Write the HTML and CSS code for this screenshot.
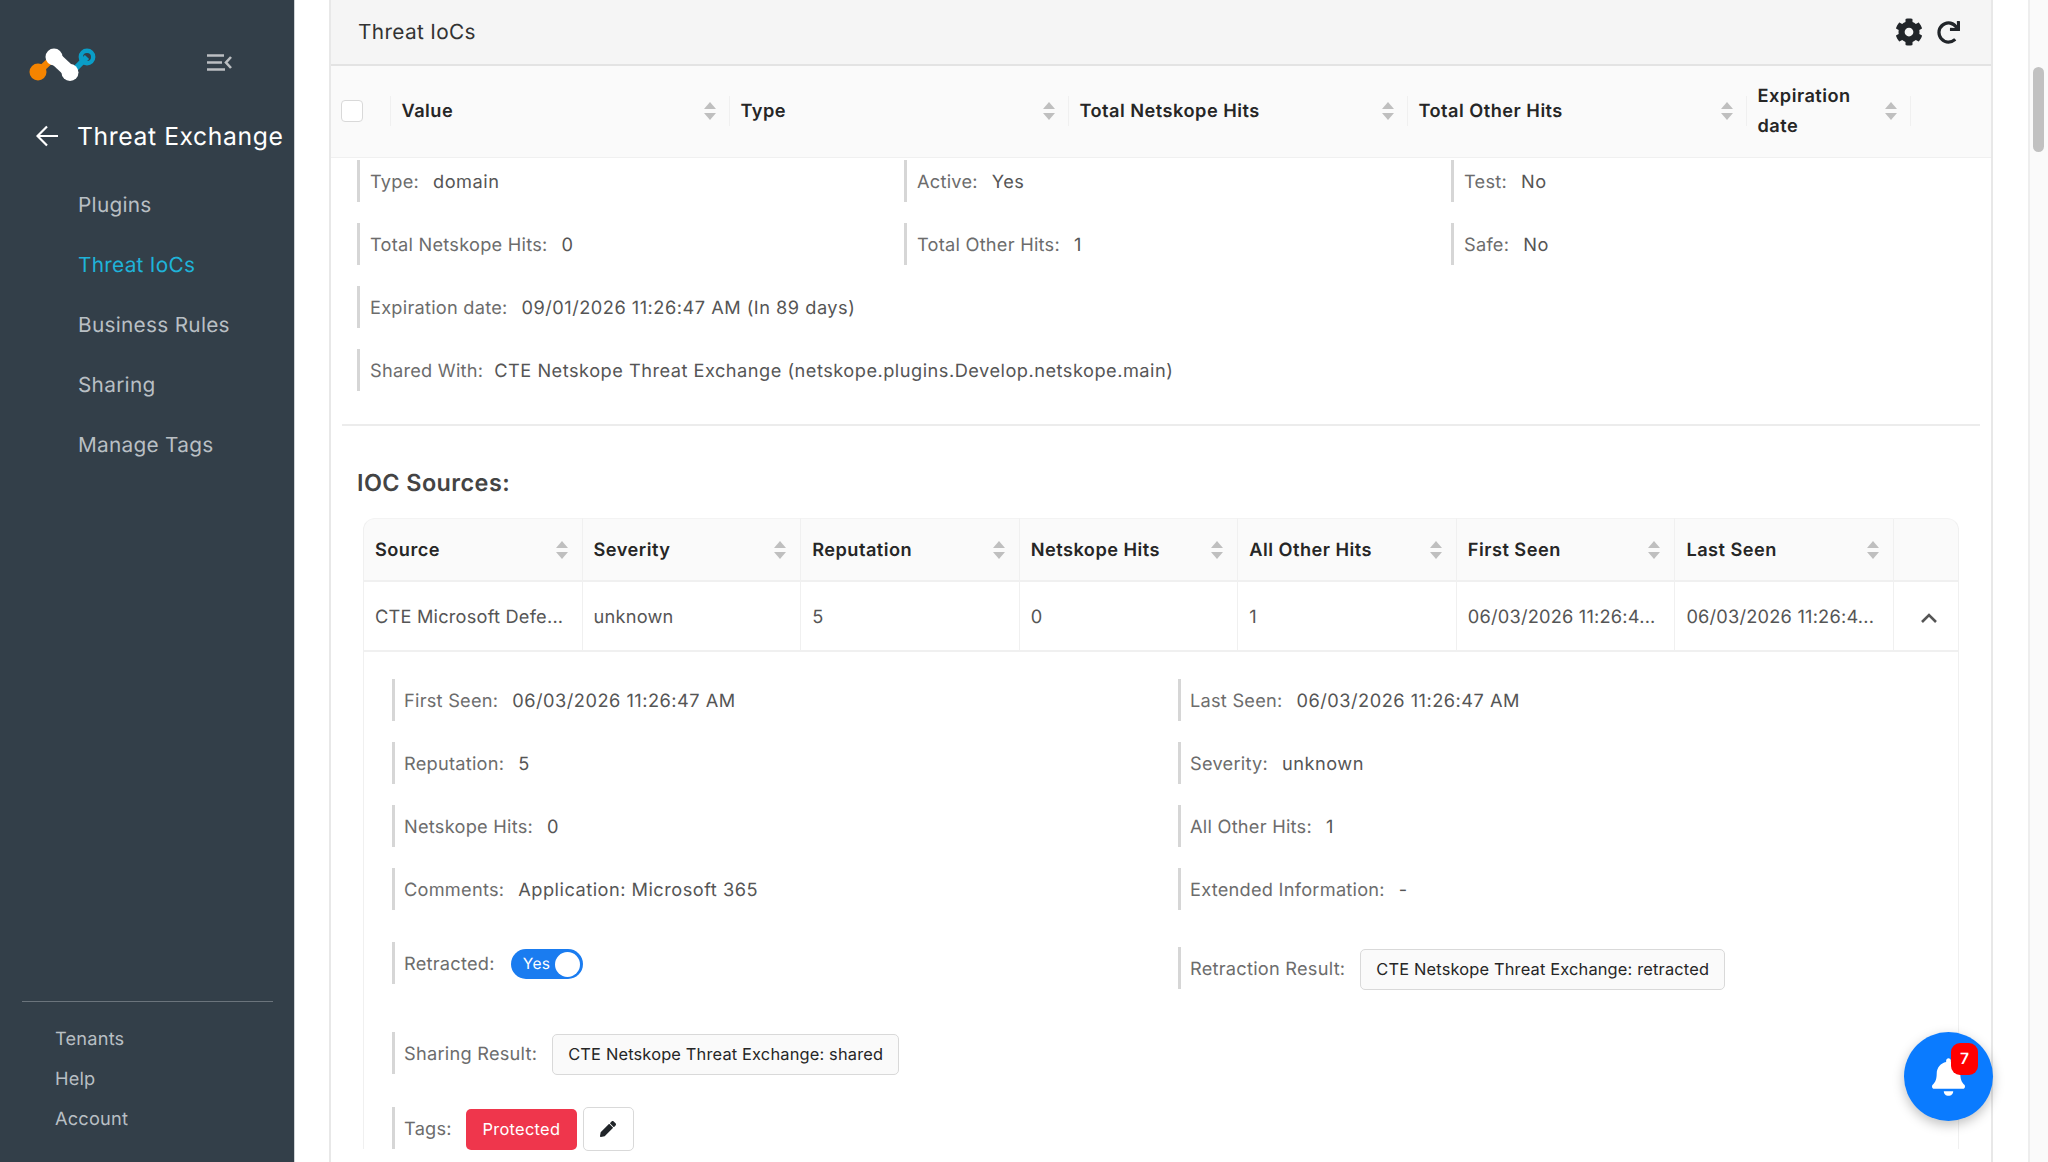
FILE: index.html
```html
<!DOCTYPE html>
<html lang="en">
<head>
    <meta charset="UTF-8">
    <title>Threat IoCs</title>
    <link rel="stylesheet" href="styles.css">
</head>
<body>

    <!-- Sidebar -->
    <div class="sidebar">
        <div class="logo-row">
            <svg class="logo" viewBox="28 46 68 36" width="68" height="36">
                <path d="M38 72L54 57" stroke="#f58400" stroke-width="7" fill="none"/>
                <circle cx="38" cy="72" r="8.5" fill="#f58400"/>
                <path d="M72 72L87 57" stroke="#0a9dc7" stroke-width="6" fill="none"/>
                <circle cx="87" cy="57" r="6.2" fill="none" stroke="#0a9dc7" stroke-width="4.4"/>
                <path d="M54 57L70 72" stroke="#fff" stroke-width="13" fill="none"/>
                <circle cx="54" cy="57" r="8.5" fill="#fff"/>
                <circle cx="70" cy="72.5" r="8.5" fill="#fff"/>
            </svg>
            <svg class="collapse-icon" viewBox="0 0 25 17" width="25" height="17">
                <path d="M0 1.5H17M0 8.5H15M0 15.5H18" stroke="#bcbfc2" stroke-width="2.6" fill="none"/>
                <path d="M24 3L19 8.5L24 14" stroke="#bcbfc2" stroke-width="2.6" fill="none"/>
            </svg>
        </div>
        <div class="title-row">
            <svg class="back-icon" viewBox="0 0 22 22" width="22" height="22">
                <path d="M22 11H2M11 1.5L1.5 11L11 20.5" stroke="#fff" stroke-width="2.2" fill="none"/>
            </svg>
            <span>Threat Exchange</span>
        </div>
        <div class="nav">
            <a>Plugins</a>
            <a class="active">Threat IoCs</a>
            <a>Business Rules</a>
            <a>Sharing</a>
            <a>Manage Tags</a>
        </div>
        <div class="nav-bottom">
            <a>Tenants</a>
            <a>Help</a>
            <a>Account</a>
        </div>
    </div>

    <!-- Main card -->
    <div class="main">
        <div class="card">
            <div class="card-header">
                <span class="card-title">Threat IoCs</span>
                <div class="card-tools">
                    <svg viewBox="0 0 512 512" width="28" height="28"><path fill="#212529" d="M487.4 315.7l-42.6-24.6c4.3-23.2 4.3-47 0-70.2l42.6-24.6c4.9-2.8 7.1-8.6 5.5-14-11.1-35.6-30-67.8-54.7-94.6-3.8-4.1-10-5.1-14.8-2.3L380.8 110c-17.9-15.4-38.5-27.3-60.8-35.1V25.8c0-5.6-3.9-10.5-9.4-11.7-36.7-8.2-74.3-7.8-109.2 0-5.5 1.2-9.4 6.1-9.4 11.7V75c-22.2 7.9-42.8 19.8-60.8 35.1L88.7 85.5c-4.9-2.8-11-1.9-14.8 2.3-24.7 26.7-43.6 58.9-54.7 94.6-1.7 5.4.6 11.2 5.5 14L67.3 221c-4.3 23.2-4.3 47 0 70.2l-42.6 24.6c-4.9 2.8-7.1 8.6-5.5 14 11.1 35.6 30 67.8 54.7 94.6 3.8 4.1 10 5.1 14.8 2.3l42.6-24.6c17.9 15.4 38.5 27.3 60.8 35.1v49.2c0 5.6 3.9 10.5 9.4 11.7 36.7 8.2 74.3 7.8 109.2 0 5.5-1.2 9.4-6.1 9.4-11.7v-49.2c22.2-7.9 42.8-19.8 60.8-35.1l42.6 24.6c4.9 2.8 11 1.9 14.8-2.3 24.7-26.7 43.6-58.9 54.7-94.6 1.5-5.5-.7-11.3-5.6-14.1zM256 336c-44.1 0-80-35.9-80-80s35.9-80 80-80 80 35.9 80 80-35.9 80-80 80z"/></svg>
                    <svg viewBox="0 0 512 512" width="23" height="23"><path fill="#212529" d="M500.33 0h-47.41a12 12 0 0 0-12 12.57l4 82.76A247.42 247.42 0 0 0 256 8C119.34 8 7.9 119.53 8 256.19 8.1 393.07 119.1 504 256 504a247.1 247.1 0 0 0 166.18-63.91 12 12 0 0 0 .48-17.43l-34-34a12 12 0 0 0-16.38-.55A176 176 0 1 1 402.1 157.8l-101.53-4.87a12 12 0 0 0-12.57 12v47.41a12 12 0 0 0 12 12h200.33a12 12 0 0 0 12-12V12a12 12 0 0 0-12-12z"/></svg>
                </div>
            </div>

            <div class="table-head">
                <div class="check-col"><span class="checkbox"></span></div>
                <div class="th"><span class="th-text">Value</span><span class="sort"></span></div>
                <div class="th"><span class="th-text">Type</span><span class="sort"></span></div>
                <div class="th"><span class="th-text">Total Netskope Hits</span><span class="sort"></span></div>
                <div class="th"><span class="th-text">Total Other Hits</span><span class="sort"></span></div>
                <div class="th"><span class="th-text">Expiration date</span><span class="sort"></span></div>
                <div class="th"></div>
            </div>

            <!-- Expanded row -->
            <div class="details">
                <div class="details-grid">
                    <div class="info"><label>Type:</label><span>domain</span></div>
                    <div class="info"><label>Active:</label><span>Yes</span></div>
                    <div class="info"><label>Test:</label><span>No</span></div>
                    <div class="info"><label>Total Netskope Hits:</label><span>0</span></div>
                    <div class="info"><label>Total Other Hits:</label><span>1</span></div>
                    <div class="info"><label>Safe:</label><span>No</span></div>
                    <div class="info wide"><label>Expiration date:</label><span>09/01/2026 11:26:47 AM (In 89 days)</span></div>
                    <div class="info wide"><label class="shared-label">Shared With:</label><span>CTE Netskope Threat Exchange (netskope.plugins.Develop.netskope.main)</span></div>
                </div>
                <hr class="divider">
                <h3 class="sources-title">IOC Sources:</h3>

                <table class="sources">
                    <thead>
                        <tr>
                            <th><div class="th-inner">Source<span class="sort"></span></div></th>
                            <th><div class="th-inner">Severity<span class="sort"></span></div></th>
                            <th><div class="th-inner">Reputation<span class="sort"></span></div></th>
                            <th><div class="th-inner">Netskope Hits<span class="sort"></span></div></th>
                            <th><div class="th-inner">All Other Hits<span class="sort"></span></div></th>
                            <th><div class="th-inner">First Seen<span class="sort"></span></div></th>
                            <th><div class="th-inner">Last Seen<span class="sort"></span></div></th>
                            <th class="toggle-col"></th>
                        </tr>
                    </thead>
                    <tbody>
                        <tr>
                            <td>CTE Microsoft Defe...</td>
                            <td>unknown</td>
                            <td>5</td>
                            <td>0</td>
                            <td>1</td>
                            <td>06/03/2026 11:26:4...</td>
                            <td>06/03/2026 11:26:4...</td>
                            <td class="toggle-col">
                                <svg viewBox="0 0 16 10" width="16" height="10"><path d="M1 9L8 2L15 9" stroke="#555" stroke-width="2.6" fill="none"/></svg>
                            </td>
                        </tr>
                        <tr>
                            <td colspan="8" class="source-detail">
                                <div class="source-cols">
                                    <div class="source-col">
                                        <div class="info"><label>First Seen:</label><span>06/03/2026 11:26:47 AM</span></div>
                                        <div class="info"><label>Reputation:</label><span>5</span></div>
                                        <div class="info"><label>Netskope Hits:</label><span>0</span></div>
                                        <div class="info"><label>Comments:</label><span>Application: Microsoft 365</span></div>
                                        <div class="info retracted">
                                            <label>Retracted:</label>
                                            <div class="switch">Yes<i></i></div>
                                        </div>
                                        <div class="info sharing">
                                            <label>Sharing Result:</label>
                                            <button class="result-btn">CTE Netskope Threat Exchange: shared</button>
                                        </div>
                                        <div class="info tags">
                                            <label>Tags:</label>
                                            <span class="tag">Protected</span>
                                            <button class="edit-btn">
                                                <svg viewBox="0 0 512 512" width="16" height="16"><path fill="#212529" d="M497.9 142.1l-46.1 46.1c-4.7 4.7-12.3 4.7-17 0l-111-111c-4.7-4.7-4.7-12.3 0-17l46.1-46.1c18.7-18.7 49.1-18.7 67.9 0l60.1 60.1c18.8 18.7 18.8 49.1 0 67.9zM284.2 99.8L21.6 362.4.4 483.9c-2.9 16.4 11.4 30.6 27.8 27.8l121.5-21.3 262.6-262.6c4.7-4.7 4.7-12.3 0-17l-111-111c-4.8-4.7-12.4-4.7-17.1 0z"/></svg>
                                            </button>
                                        </div>
                                    </div>
                                    <div class="source-col">
                                        <div class="info"><label>Last Seen:</label><span>06/03/2026 11:26:47 AM</span></div>
                                        <div class="info"><label>Severity:</label><span>unknown</span></div>
                                        <div class="info"><label>All Other Hits:</label><span>1</span></div>
                                        <div class="info"><label>Extended Information:</label><span>-</span></div>
                                        <div class="info retraction">
                                            <label>Retraction Result:</label>
                                            <button class="result-btn">CTE Netskope Threat Exchange: retracted</button>
                                        </div>
                                    </div>
                                </div>
                            </td>
                        </tr>
                    </tbody>
                </table>
            </div>
        </div>
    </div>

    <!-- Page scrollbar -->
    <div class="scroll-track"><div class="scroll-thumb"></div></div>

    <!-- Notifications -->
    <div class="fab">
        <svg viewBox="0 0 448 512" width="33" height="38"><path fill="#fff" d="M224 512c35.32 0 63.97-28.65 63.97-64H160.03c0 35.35 28.65 64 63.97 64zm215.39-149.71c-19.32-20.76-55.47-51.99-55.47-154.29 0-77.7-54.48-139.9-127.94-155.16V32c0-17.67-14.32-32-31.98-32s-31.98 14.33-31.98 32v20.84C118.56 68.1 64.08 130.3 64.08 208c0 102.3-36.15 133.53-55.47 154.29-6 6.45-8.66 14.16-8.61 21.71.11 16.4 12.98 32 32.1 32h383.8c19.12 0 32-15.6 32.1-32 .05-7.55-2.61-15.27-8.61-21.71z"/></svg>
        <span class="fab-badge">7</span>
    </div>

</body>
</html>
```

FILE: styles.css
```css
body {
    font-family: Inter, "Liberation Sans", sans-serif;
    font-size: 18.2px;
    text-rendering: geometricPrecision;
    margin: 0;
    height: 100vh;
    overflow: hidden;
    display: flex;
    background-color: #fff;
    color: #555;
}
/* Sidebar */
.sidebar {
    width: 295px;
    flex-shrink: 0;
    display: flex;
    flex-direction: column;
    background-color: #333f49;
    border-right: 1px solid #cfd3d6;
    box-sizing: border-box;
    padding-bottom: 24px;
}
.logo-row {
    display: flex;
    align-items: center;
    margin-top: 46px;
    padding-left: 28px;
    height: 36px;
}
.collapse-icon {
    margin: -3px 0 0 111px;
}
.title-row {
    display: flex;
    align-items: center;
    margin-top: 34px;
    padding-left: 36px;
    height: 40px;
    color: #fff;
    font-size: 24.7px;
    letter-spacing: 0.6px;
    white-space: nowrap;
}
.back-icon {
    margin-right: 19px;
}
.nav {
    margin-top: 20px;
    display: flex;
    flex-direction: column;
}
.nav a {
    height: 60px;
    line-height: 60px;
    padding-left: 78px;
    font-size: 20.8px;
    letter-spacing: 0.28px;
    color: #b9bfc4;
}
.nav a.active {
    color: #1fb3d9;
}
.nav-bottom {
    margin: auto 21px 0 22px;
    padding-top: 16px;
    border-top: 1px solid #6b747c;
    display: flex;
    flex-direction: column;
}
.nav-bottom a {
    height: 40px;
    line-height: 42px;
    padding-left: 33px;
    letter-spacing: 0.2px;
    color: #b9bfc4;
}
/* Card */
.main {
    flex: 1;
    min-width: 0;
    padding-left: 34px;
    padding-right: 35px;
}
.card {
    border-left: 2px solid #e8e8e8;
    border-right: 2px solid #e8e8e8;
    height: 100%;
    box-sizing: border-box;
}
.card-header {
    display: flex;
    align-items: center;
    justify-content: space-between;
    height: 64px;
    padding: 0 31px 0 27px;
    background-color: #f5f5f5;
    border-bottom: 2px solid #e3e3e3;
}
.card-title {
    font-size: 20.8px;
    letter-spacing: 0.35px;
    color: #333;
}
.card-tools {
    display: flex;
    align-items: center;
    gap: 14px;
}
.table-head {
    display: grid;
    grid-template-columns: 59px repeat(4, 339px) 164px 1fr;
    align-items: center;
    height: 92px;
    box-sizing: border-box;
    background-color: #fafafa;
    border-bottom: 1px solid #f0f0f0;
    padding-bottom: 2px;
}
.check-col {
    padding-left: 10px;
    display: flex;
}
.checkbox {
    width: 20px;
    height: 20px;
    background-color: #fff;
    border: 1px solid #d9d9d9;
    border-radius: 4px;
}
.th {
    display: flex;
    align-items: center;
    height: 30px;
    padding: 0 13px 0 10.5px;
    border-left: 1px solid #f0f0f0;
    color: #262626;
    font-weight: 600;
    letter-spacing: 0.48px;
    line-height: 30px;
}
.th-text {
    flex: 1;
}
.sort {
    display: flex;
    flex-direction: column;
    gap: 4px;
    flex-shrink: 0;
}
.sort::before,
.sort::after {
    content: "";
    width: 0;
    height: 0;
    border-left: 6px solid transparent;
    border-right: 6px solid transparent;
}
.sort::before {
    border-bottom: 7px solid #bfbfbf;
}
.sort::after {
    border-top: 7px solid #bfbfbf;
}
/* Expanded details */
.details {
    padding: 2px 0 0 26px;
}
.details-grid {
    display: grid;
    grid-template-columns: repeat(3, 547px);
    row-gap: 21px;
}
.info {
    display: flex;
    align-items: center;
    height: 42px;
    box-sizing: border-box;
    padding: 2px 0 0 10px;
    border-left: 3px solid #d6d6d6;
    white-space: nowrap;
}
.info label {
    color: #6c6c6c;
    letter-spacing: 0.25px;
    margin-right: 14px;
}
.info .shared-label {
    margin-right: 11px;
}
.info span {
    color: #555;
    letter-spacing: 0.5px;
}
.wide {
    grid-column: 1 / -1;
}
.divider {
    margin: 33px 11px 0 -15px;
    border: none;
    border-top: 2px solid #ececec;
}
.sources-title {
    margin: 41px 0 0;
    font-size: 23.4px;
    letter-spacing: 0.43px;
    line-height: 32px;
    font-weight: 600;
    color: #444;
}
.sources {
    margin: 19px 0 0 6px;
    width: 1596px;
    table-layout: fixed;
    border-collapse: separate;
    border-spacing: 0;
}
.sources th {
    height: 61px;
    padding: 0 14px 0 11px;
    background-color: #fafafa;
    color: #262626;
    font-weight: 600;
    letter-spacing: 0.48px;
    text-align: left;
    border-left: 1px solid #f0f0f0;
    border-top: 1px solid #f3f3f3;
    border-bottom: 2px solid #f0f0f0;
}
.sources th:first-child {
    border-top-left-radius: 12px;
}
.sources th:last-child {
    border-top-right-radius: 12px;
    border-right: 1px solid #f0f0f0;
}
.th-inner {
    display: flex;
    align-items: center;
    justify-content: space-between;
}
.sources td {
    height: 66px;
    padding: 2px 11px 0;
    border-left: 1px solid #f0f0f0;
    border-bottom: 2px solid #f0f0f0;
    letter-spacing: 0.22px;
    white-space: nowrap;
}
.sources td:last-child {
    border-right: 1px solid #f0f0f0;
}
.sources .toggle-col {
    width: 66px;
    box-sizing: border-box;
    text-align: center;
    padding-left: 17px;
}
.sources .source-detail {
    height: auto;
    padding: 27px 0 0 28px;
    border-bottom: none;
    text-align: left;
}
.source-cols {
    display: grid;
    grid-template-columns: 786px 1fr;
}
.source-col {
    display: flex;
    flex-direction: column;
    gap: 21px;
}
.source-col .info {
    padding-left: 9px;
}
.retracted {
    margin-top: 11px;
}
.sharing {
    margin-top: 27px;
}
.tags {
    margin-top: 12px;
}
.retraction {
    margin-top: 16px;
}
.switch {
    position: relative;
    width: 72px;
    height: 30px;
    box-sizing: border-box;
    padding-left: 12px;
    line-height: 30px;
    border-radius: 15px;
    background-color: #1a7cf0;
    color: #fff;
    font-size: 15.6px;
    letter-spacing: 0.3px;
    margin-left: 2px;
}
.switch i {
    position: absolute;
    right: 3px;
    top: 2.5px;
    width: 25px;
    height: 25px;
    border-radius: 50%;
    background-color: #fff;
}
.result-btn {
    font-family: inherit;
    font-size: 16.4px;
    letter-spacing: 0.17px;
    text-rendering: inherit;
    color: #262626;
    height: 41px;
    padding: 0 15px;
    margin-left: 1px;
    background-color: #fafafa;
    border: 1px solid #d9d9d9;
    border-radius: 5px;
}
.tag {
    display: flex;
    align-items: center;
    justify-content: center;
    width: 111px;
    height: 41px;
    border-radius: 5px;
    background-color: #ef364c;
    font-size: 16.4px;
}
.info .tag {
    color: #fff;
    letter-spacing: 0.3px;
}
.edit-btn {
    display: flex;
    align-items: center;
    justify-content: center;
    margin-left: 6px;
    width: 51px;
    height: 44px;
    padding: 0;
    background-color: #fff;
    border: 1px solid #d9d9d9;
    border-radius: 5px;
}
/* Scrollbar */
.scroll-track {
    width: 20px;
    flex-shrink: 0;
    box-sizing: border-box;
    border-left: 2px solid #eee;
    background-color: #fafafa;
    padding: 67px 4px 0 3px;
}
.scroll-thumb {
    height: 85px;
    border-radius: 6px;
    background-color: #c1c1c1;
}
/* Notification button */
.fab {
    position: fixed;
    left: 1904px;
    top: 1032px;
    width: 89px;
    height: 89px;
    border-radius: 50%;
    background-color: #0a7bff;
    box-shadow: 0 4px 12px rgba(0, 0, 0, 0.25);
    display: flex;
    align-items: center;
    justify-content: center;
}
.fab-badge {
    position: absolute;
    left: 47px;
    top: 11px;
    width: 27px;
    height: 32px;
    border-radius: 9px;
    background-color: #f00;
    color: #fff;
    font-size: 15.6px;
    font-weight: 600;
    line-height: 32px;
    text-align: center;
}
```
